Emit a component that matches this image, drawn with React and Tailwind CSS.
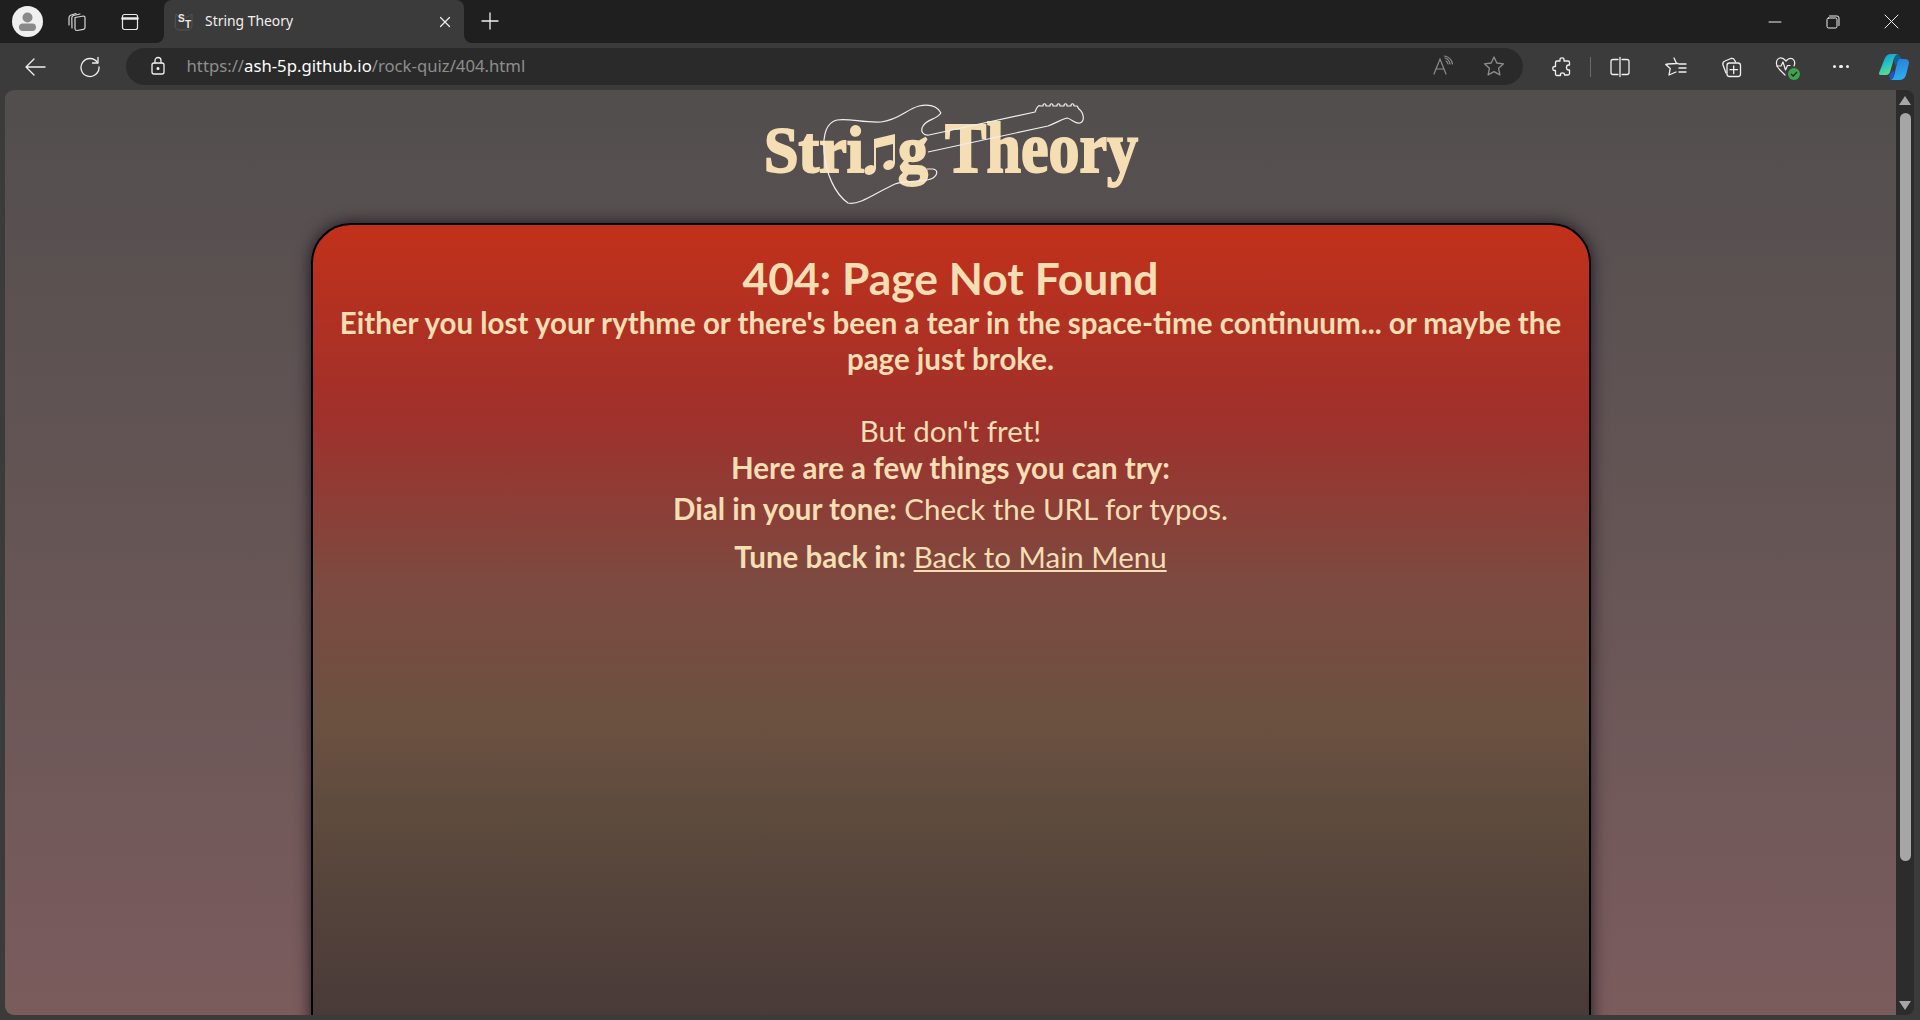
import React from "react";

const S = ({ w = 20, h = 20, vb = "0 0 20 20", children, c = "#e6e6e6", sw = 1.2, className = "" }) => (
  <svg width={w} height={h} viewBox={vb} fill="none" stroke={c} strokeWidth={sw} strokeLinecap="round" strokeLinejoin="round" className={className}>
    {children}
  </svg>
);

const Slot = ({ w, children, className = "" }) => (
  <div className={`flex items-center justify-center shrink-0 ${className}`} style={{ width: w }}>{children}</div>
);

function Avatar() {
  return (
    <div className="w-[31px] h-[31px] rounded-full bg-[#f0f0f0] overflow-hidden flex items-center justify-center">
      <svg width="31" height="31" viewBox="0 0 31 31">
        <circle cx="15.5" cy="11.5" r="5" fill="#8a8a8a" />
        <rect x="7" y="17.5" width="17" height="7.5" rx="3.7" fill="#8a8a8a" />
      </svg>
    </div>
  );
}

function Favicon() {
  return (
    <div className="relative w-[20px] h-[20px]">
      <svg width="20" height="20" viewBox="0 0 20 20" className="absolute inset-0" fill="none" stroke="#555" strokeWidth="1">
        <path d="M2 2 L5 5 H14 L18 2 V13 Q18 18 13 18 H6 Q1 18 1 13 Z" />
      </svg>
      <span className="absolute left-[4px] top-[1px] text-[10px] leading-[11px] font-bold text-[#e8e8e8] font-['Liberation_Sans',sans-serif]">S</span>
      <span className="absolute left-[11px] top-[7px] text-[10px] leading-[11px] font-bold text-[#e8e8e8] font-['Liberation_Sans',sans-serif]">T</span>
    </div>
  );
}

function TabStrip() {
  return (
    <div className="h-[43px] bg-[#1f1f1f] flex items-center shrink-0">
      <Slot w={12} />
      <Slot w={31}><Avatar /></Slot>
      <Slot w={14} />
      <Slot w={40}>
        <S w={22} h={22} vb="0 0 22 22" c="#d8d8d8">
          <path d="M9 6.5 L17.5 5 Q19 5 19 6.5 V16.5 Q19 18 17.5 18.3 L11 19.5 Q9.2 19.5 9 18 Z" />
          <path d="M6 17 L5.8 7 Q5.8 5 7.5 4.5 L14 3" />
          <path d="M3 14 L3 7 Q3 5 4.5 4.3 L10 2.5" />
        </S>
      </Slot>
      <Slot w={13} />
      <Slot w={40}>
        <S w={20} h={20} c="#e8e8e8">
          <rect x="2.5" y="2.5" width="15" height="15" rx="2" />
          <path d="M2.5 6.5 H17.5" strokeWidth="2.6" />
        </S>
      </Slot>
      <Slot w={14} />
      <div className="relative w-[300px] h-[43px] bg-[#3b3b3b] rounded-t-[8px] flex items-center shrink-0">
        <div className="absolute -left-[8px] bottom-0 w-[8px] h-[8px] bg-[#3b3b3b]"><div className="w-full h-full bg-[#1f1f1f] rounded-br-[8px]" /></div>
        <div className="absolute -right-[8px] bottom-0 w-[8px] h-[8px] bg-[#3b3b3b]"><div className="w-full h-full bg-[#1f1f1f] rounded-bl-[8px]" /></div>
        <div className="ml-[10px]"><Favicon /></div>
        <span className="ml-[11px] text-[13.9px] text-[#f0f0f0] font-['Noto_Sans',sans-serif] whitespace-nowrap">String Theory</span>
        <div className="ml-auto mr-[13px]">
          <S w={12} h={12} vb="0 0 12 12" c="#f0f0f0" sw={1.2}><path d="M1.5 1.5 L10.5 10.5 M10.5 1.5 L1.5 10.5" /></S>
        </div>
      </div>
      <Slot w={52} className="mt-[-1px]">
        <S w={18} h={18} vb="0 0 18 18" c="#f0f0f0" sw={1.3}><path d="M9 1 V17 M1 9 H17" /></S>
      </Slot>
      <div className="flex-1" />
      <Slot w={58}><S w={14} h={14} vb="0 0 14 14" c="#f0f0f0" sw={1}><path d="M1 7 H13" /></S></Slot>
      <Slot w={58}>
        <S w={14} h={14} vb="0 0 14 14" c="#f0f0f0" sw={1}>
          <rect x="1" y="3" width="10" height="10" rx="1.5" />
          <path d="M3.5 1 H11 Q13 1 13 3 V10.5" />
        </S>
      </Slot>
      <Slot w={58}><S w={15} h={15} vb="0 0 15 15" c="#f0f0f0" sw={1}><path d="M1 1 L14 14 M14 1 L1 14" /></S></Slot>
    </div>
  );
}

function Toolbar() {
  return (
    <div className="h-[47px] bg-[#3b3b3b] flex items-center shrink-0">
      <Slot w={70}>
        <S w={22} h={22} vb="0 0 22 22" c="#f0f0f0" sw={1.3}><path d="M21 11 H2 M10 3 L2 11 L10 19" /></S>
      </Slot>
      <Slot w={40}>
        <S w={22} h={22} vb="0 0 22 22" c="#f0f0f0" sw={1.3}>
          <path d="M18.5 6.5 A9 9 0 1 0 20 11" />
          <path d="M19 1.5 V7 H13.5" />
        </S>
      </Slot>
      <div className="w-[16px]" />
      <div className="w-[1397px] h-[37px] mt-[-1px] rounded-full bg-[#2a2a2a] flex items-center shrink-0">
        <Slot w={64}>
          <S w={18} h={20} vb="0 0 18 20" c="#f0f0f0" sw={1.3}>
            <rect x="3" y="7" width="12" height="11" rx="2" />
            <path d="M6 7 V4.5 A3 3 0 0 1 12 4.5 V7" />
            <circle cx="9" cy="12.5" r="0.9" fill="#f0f0f0" />
          </S>
        </Slot>
        <span className="ml-[-3px] text-[16.7px] font-['Noto_Sans',sans-serif] whitespace-nowrap text-[#8e8e8e]">
          https://<span className="text-white">ash-5p.github.io</span>/rock-quiz/404.html
        </span>
        <div className="flex-1" />
        <Slot w={50}>
          <svg width="22" height="22" viewBox="0 0 22 22" fill="none" stroke="#8e8e8e" strokeWidth="1.2" strokeLinecap="round">
            <path d="M2 19 L8 4 L14 19 M4 14 H12" />
            <path d="M13 3 Q17 4 18 9 M14 6 Q15.5 6.5 16 9 M12.5 1 Q19 2 20.5 9" />
          </svg>
        </Slot>
        <Slot w={52}>
          <S w={22} h={22} vb="0 0 22 22" c="#8e8e8e" sw={1.3}>
            <path d="M11 2 L13.8 8 L20.5 8.8 L15.6 13.3 L16.9 19.9 L11 16.6 L5.1 19.9 L6.4 13.3 L1.5 8.8 L8.2 8 Z" />
          </S>
        </Slot>
        <div className="w-[3px]" />
      </div>
      <Slot w={72} className="ml-[3px]">
        <S w={22} h={22} vb="0 0 22 22" c="#f0f0f0" sw={1.3}>
          <path d="M9 3.5 Q9 1.8 11 1.8 Q13 1.8 13 3.5 V5 H17 Q18.5 5 18.5 6.5 V9 H17.5 Q15.5 9 15.5 11.5 Q15.5 14 17.5 14 H18.5 V17.5 Q18.5 19 17 19 H13.5 V18.5 Q13.5 16.8 11.5 16.8 Q9.5 16.8 9.5 18.5 V19.5 H6 Q4.5 19.5 4.5 18 V14.5 H3.5 Q1.8 14.5 1.8 12.5 Q1.8 10.5 3.5 10.5 H4.5 V6.5 Q4.5 5 6 5 H9 Z" />
        </S>
      </Slot>
      <div className="w-[1.5px] h-[20px] bg-[#6a6a6a] ml-[-8px]" />
      <Slot w={54} className="ml-[2px]">
        <S w={22} h={22} vb="0 0 22 22" c="#f0f0f0" sw={1.3}>
          <path d="M9 3.5 H4 Q2 3.5 2 5.5 V16.5 Q2 18.5 4 18.5 H9" />
          <path d="M13 3.5 H18 Q20 3.5 20 5.5 V16.5 Q20 18.5 18 18.5 H13" />
          <path d="M11 1.5 V20.5" />
        </S>
      </Slot>
      <Slot w={57}>
        <S w={24} h={22} vb="0 0 24 22" c="#f0f0f0" sw={1.3}>
          <path d="M10 2 L12.5 7.5 L4 8 L1.8 8.5 L6.2 12.6 L5 19 L12 16 M12.5 7.5 H14 M15 8 H22 M15 12 H22 M15 16 H22" />
        </S>
      </Slot>
      <Slot w={54}>
        <S w={22} h={22} vb="0 0 22 22" c="#f0f0f0" sw={1.3}>
          <path d="M6 17 L3 9 Q2.2 6 5 5 L11 2.5 Q13.5 1.8 14.5 4 L15.5 6" />
          <rect x="7" y="7" width="13.5" height="13.5" rx="2.5" />
          <path d="M13.7 10 V17.5 M10 13.7 H17.5" />
        </S>
      </Slot>
      <Slot w={56}>
        <div className="relative w-[24px] h-[22px] ml-[2px]">
          <S w={22} h={22} vb="0 0 22 22" c="#f0f0f0" sw={1.2}>
            <path d="M11 5 Q8 1.5 5 2 Q1 3 1.5 8 Q2 11 5 14 L10 19 M19 10 Q21 5 17.5 2.8 Q14 1.5 11 5" />
            <path d="M1.5 10 H6 L8 6 L10.5 14 L12.5 9.5 H15" />
          </S>
          <div className="absolute right-[-1px] bottom-[-2px] w-[12px] h-[12px] rounded-full bg-[#3fa34d] flex items-center justify-center">
            <svg width="8" height="8" viewBox="0 0 8 8" fill="none" stroke="#1c2c1c" strokeWidth="1.3"><path d="M1 4 L3.2 6 L7 2" /></svg>
          </div>
        </div>
      </Slot>
      <Slot w={54}>
        <div className="flex gap-[3px]">
          <div className="w-[3.5px] h-[3.5px] rounded-full bg-[#f0f0f0]" />
          <div className="w-[3.5px] h-[3.5px] rounded-full bg-[#f0f0f0]" />
          <div className="w-[3.5px] h-[3.5px] rounded-full bg-[#f0f0f0]" />
        </div>
      </Slot>
      <Slot w={52}>
        <svg width="32" height="28" viewBox="0 0 32 28">
          <defs>
            <linearGradient id="cpL" x1="0" y1="0" x2="0.4" y2="1">
              <stop offset="0" stopColor="#1b8fd8" />
              <stop offset="0.55" stopColor="#27c2c0" />
              <stop offset="1" stopColor="#5fdc8c" />
            </linearGradient>
            <linearGradient id="cpR" x1="0.4" y1="0" x2="0.6" y2="1">
              <stop offset="0" stopColor="#2a7fd8" />
              <stop offset="1" stopColor="#2bb0f0" />
            </linearGradient>
          </defs>
          <path d="M13 1 H20 Q17 2 15.5 7 L12 19 Q11 22 8 22 H2.5 Q0.5 22 1 20 L6.5 6 Q8.5 1 13 1 Z" fill="url(#cpL)" />
          <path d="M21 6 H26.5 Q31 6 31 10 L28 22 Q26.5 27 21 27 H12 Q15 26 16.5 21 L19 10 Q19.5 7 21 6 Z" fill="url(#cpR)" />
          <path d="M13 27 L11 23 L15 17 L16.5 21 Q15.5 26 13 27 Z" fill="#2450c8" />
          <path d="M20 1 L24 6 H21 Q19.5 7 19 10 L18 14 L15.5 7 Q17 2 20 1 Z" fill="#12618f" />
        </svg>
      </Slot>
    </div>
  );
}

function Logo() {
  const f = "'Liberation Serif', 'DejaVu Serif', serif";
  return (
    <svg width="420" height="130" viewBox="0 0 420 130" className="block shrink-0 overflow-visible">
      <g fill="#f5deb3" stroke="#f5deb3" strokeWidth="2" fontFamily={f} fontWeight="700">
        <text x="23" y="82" fontSize="66" textLength="100" lengthAdjust="spacingAndGlyphs">Stri</text>
        <text x="157" y="82" fontSize="66" textLength="30" lengthAdjust="spacingAndGlyphs">g</text>
        <text x="204" y="82" fontSize="72" textLength="193" lengthAdjust="spacingAndGlyphs">Theory</text>
      </g>
      <g fill="#f5deb3">
        <ellipse cx="129" cy="80" rx="6" ry="4.6" transform="rotate(-25 129 80)" />
        <ellipse cx="148" cy="75" rx="6" ry="4.6" transform="rotate(-25 148 75)" />
        <path d="M133 79 L133 49 L154 44 L154 74 L152 74 L152 54 L135 58 L135 79 Z" />
      </g>
      <g fill="none" stroke="#efefef" strokeWidth="1.2" strokeLinejoin="round">
        <path d="M200 23 C196 16 188 14 178 16 C166 19 158 30 140 32 C122 33 108 28 96 30 C84 33 82 48 83 62 C85 84 94 104 107 113 C118 116 136 102 154 94 C164 90 184 93 192 88 C197 84 197 80 192 79 C188 79 186 79 186 79" />
        <path d="M200 23 C195 30 186 29 182 36 C179 41 182 46 188 45 L294 22 C296 16 298 15 300 16 L302 16 C302 13 305 13 305 16 L309 16 C309 13 312 13 312 16 L316 16 C316 13 319 13 319 16 L323 16 C323 13 326 13 326 16 L330 16 C330 13 333 13 333 16 L336 16 C337 17 337 18 338 19 C343 23 344 31 339 33 C334 34 331 29 326 28 C319 30 315 33 307 36 L187 62" />
      </g>
    </svg>
  );
}

function Page() {
  return (
    <div className="flex-1 min-w-0 h-full rounded-l-[9px] overflow-hidden flex flex-col items-center bg-gradient-to-b from-[#524e4e] to-[#7b5c5d]">
      <Logo />
      <div className="mt-[3px] w-[1280px] h-[1000px] shrink-0 rounded-[40px] border-2 border-black shadow-[0_0_16px_rgba(12,8,20,0.8)] text-center text-[#f5deb3] font-['Lato',sans-serif] px-[22px] pt-[28px] bg-[linear-gradient(180deg,#c2311a_0%,#a0302b_19%,#7c4a40_36%,#6b5140_50%,#5c4a3d_60%,#493938_80%,#433535_100%)]">
        <h1 className="text-[44.4px] leading-[50px] font-bold">404: Page Not Found</h1>
        <p className="text-[29.5px] leading-[36px] font-bold mt-[2px]">Either you lost your rythme or there's been a tear in the space-time continuum... or maybe the page just broke.</p>
        <p className="text-[29.5px] leading-[36px] mt-[36px]">But don't fret!</p>
        <p className="text-[29.5px] leading-[36px] font-bold mt-[1px]">Here are a few things you can try:</p>
        <p className="text-[29.5px] leading-[36px] mt-[5px]"><b>Dial in your tone:</b> Check the URL for typos.</p>
        <p className="text-[29.5px] leading-[36px] mt-[12px]"><b>Tune back in:</b> <a className="underline" href="#">Back to Main Menu</a></p>
      </div>
    </div>
  );
}

function Scrollbar() {
  return (
    <div className="w-[18px] h-full bg-[#2c2c2c] rounded-r-[8px] shrink-0 flex flex-col items-center pt-[6px] pb-[5px]">
      <div className="w-0 h-0 border-l-[6.5px] border-r-[6.5px] border-b-[9px] border-l-transparent border-r-transparent border-b-[#a6a6a6]" />
      <div className="w-[11px] h-[748px] mt-[8px] rounded-full bg-[#a6a6a6]" />
      <div className="flex-1" />
      <div className="w-0 h-0 border-l-[6.5px] border-r-[6.5px] border-t-[9px] border-l-transparent border-r-transparent border-t-[#a6a6a6]" />
    </div>
  );
}

export default function App() {
  return (
    <div className="w-[1920px] h-[1020px] overflow-hidden flex flex-col bg-[#3b3b3b]">
      <TabStrip />
      <Toolbar />
      <div className="h-[925px] flex pl-[5px] pr-[6px]">
        <Page />
        <Scrollbar />
      </div>
    </div>
  );
}
